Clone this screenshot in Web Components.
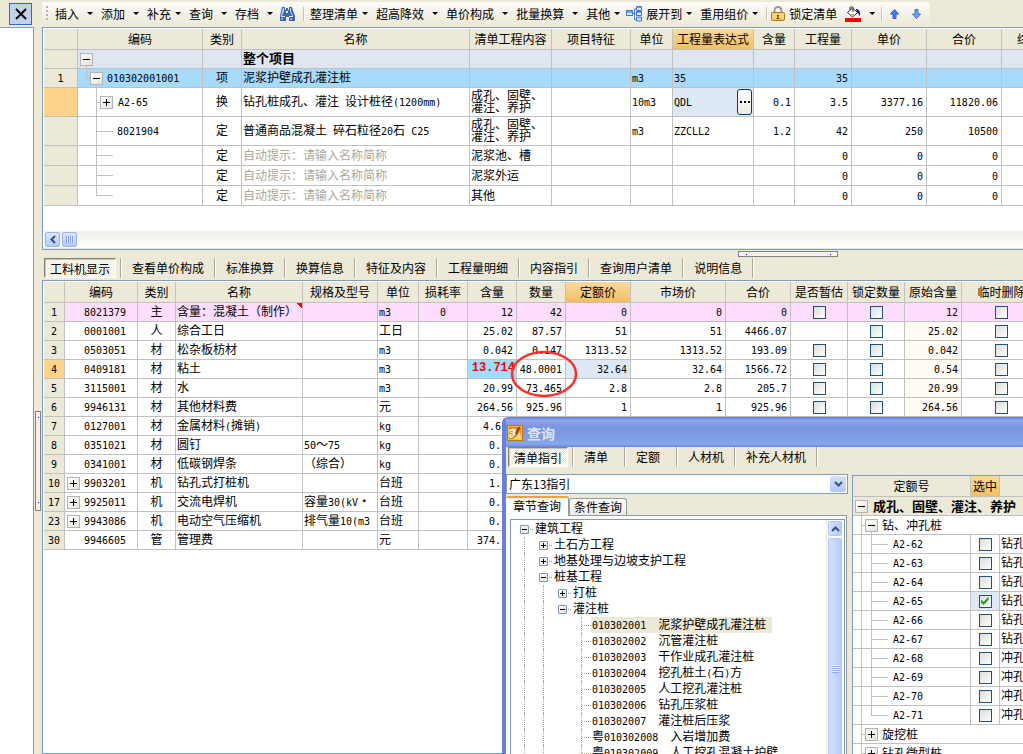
<!DOCTYPE html>
<html lang="zh-CN">
<head>
<meta charset="utf-8">
<title>工程量清单</title>
<style>
html, body { height: 100%; margin: 0; overflow: hidden; background: #ece9d8; }
</style>
</head>
<body>
<budget-app></budget-app>
<script>
const BASE = `
  :host { font: 12px/16px "Noto Sans CJK SC", sans-serif; color: #000; box-sizing: border-box; }
  *, *::before, *::after { box-sizing: border-box; }
  button { font: inherit; color: inherit; background: none; border: 0; padding: 0; margin: 0; white-space: nowrap; }
  .m { font: 10px/12px "DejaVu Sans Mono", monospace; white-space: pre; }
  input[type=checkbox] { appearance: none; display: block; width: 13px; height: 13px; margin: 0 auto;
    border: 1px solid #1c5180; background: linear-gradient(135deg, #dcdcd7, #fff); }
  input[type=checkbox]:checked::before { content: ""; display: block; width: 9px; height: 9px; margin: 1px; background: #21a121;
    clip-path: polygon(0 30%, 35% 60%, 90% 0, 90% 35%, 35% 95%, 0 65%); }
`;
const GRID = `
  table { table-layout: fixed; border-collapse: separate; border-spacing: 0; background: #fff; }
  th { font-weight: normal; background: #ece9d8; height: 20px; }
  th, td { padding: 0 3px 2px 1px; border-right: 1px solid #c0c0c0; border-bottom: 1px solid #c0c0c0;
    white-space: nowrap; overflow: hidden; text-align: left; line-height: 16px; }
  thead th { text-align: center; padding: 0; height: 21px; }
  thead th.on { background: linear-gradient(#fbd9a0, #f2be62); }
  tbody th { text-align: center; padding: 0 0 2px; }
  tbody th.on { background: #ffd28c; }
  td.c { text-align: center; padding: 0 0 2px; }
  td.box { padding: 0; }
  td.r { text-align: right; }
  td.hint { color: #aca899; }
  td.two { line-height: 12px; }
  td.code { background-repeat: no-repeat; padding: 0 3px 0 2px; }
  td.code > div { display: flex; align-items: center; }
  td.code .m { padding-top: 1px; }
`;
const esc = s => s.replace(/&/g, '&amp;').replace(/</g, '&lt;');
/* Latin runs use the half-width monospaced face */
const t = s => esc(s).replace(/[\x20-\x7e\u00a0]+/g, r => `<span class="m">${r}</span>`);

function define(name, css, html, after) {
  const tpl = document.createElement('template');
  tpl.innerHTML = `<style>${BASE}${css}</style>${html}`;
  customElements.define(name, class extends HTMLElement {
    constructor() {
      super();
      this.attachShadow({ mode: 'open' }).append(tpl.content.cloneNode(true));
    }
    connectedCallback() { if (after) after.call(this, this.shadowRoot); }
  });
}

/* ---------- small parts ---------- */
define('tree-toggle', `
  :host { display: block; flex: none; width: 13px; height: 13px; }
  button { display: grid; place-items: center; width: 100%; height: 100%; border: 1px solid #b4b4b4; background: linear-gradient(135deg, #fff, #e4e2da); }
  svg { display: block; }
  :host([small]) { width: 9px; height: 9px; }
  :host([small]) button { border-color: #7898b5; border-radius: 1px; }
  :host([open]) .v { display: none; }
`, `<button type="button" aria-label="展开或折叠"><svg width="7" height="7" viewBox="0 0 7 7" shape-rendering="crispEdges"><path class="h" d="M0 3h7v1H0z"/><path class="v" d="M3 0h1v7H3z"/></svg></button>`,
function (root) {
  if (this.hasAttribute('small')) {
    root.querySelector('.h').setAttribute('d', 'M1 3h5v1H1z');
    root.querySelector('.v').setAttribute('d', 'M3 1h1v5H3z');
  }
});

/* The tabs attribute lists the labels; the first is the selected one */
define('tab-strip', `
  :host { display: flex; align-items: stretch; height: 20px; }
  button { text-align: left; border-right: 1px solid #aca899; box-shadow: 1px 0 #fff; margin-right: 1px; padding: 0 10px; min-width: var(--tab-min, 0); }
  button[aria-selected=true] { border: 1px solid; border-color: #85836f #fff #fff #85836f; box-shadow: inset 1px 1px #c8c5b4; margin: 0; padding: 2px 5px 0; min-width: 0;
    background: conic-gradient(#fff 25%, #ece9d8 0 50%, #fff 0 75%, #ece9d8 0) 0 0/2px 2px; }
  .bar { width: 2px; margin-left: 4px; background: linear-gradient(90deg, #aca899 50%, #fff 50%); }
`, '', function (root) {
  this.getAttribute('tabs').split(' ').forEach((label, i) => {
    const b = document.createElement('button');
    b.type = 'button';
    b.textContent = label;
    b.setAttribute('aria-selected', i === 0);
    root.append(b);
    if (i === 0) {
      const bar = document.createElement('span');
      bar.className = 'bar';
      root.append(bar);
    }
  });
});

/* ---------- toolbar ---------- */
const ICONS = {
  find: `<svg width="16" height="16" viewBox="0 0 16 16"><path d="M3 1h3v3h1V2h2v2h1V1h3l1 4 2 5v5h-6v-4H7v4H1v-5l1-5z" fill="#3d66b0"/><path d="M4 2h1v3L3 10H2l1-5zM11 2h1v3l2 5h-1l-2-5z" fill="#b9d2f6"/><path d="M2 10h4v1H2zM10 10h4v1h-4zM7 5h2v2H7z" fill="#e6effc"/><path d="M2 12h2v2H2zM11 12h2v2h-2z" fill="#84a8e4"/></svg>`,
  tree: `<svg width="16" height="16" viewBox="0 0 16 16"><path d="M6 7.500h3.500M8.500 3v10.500H11M8.500 3H11" stroke="#4a7ac4" fill="none"/><g fill="#dfeaff" stroke="#3f74cf"><path d="M.5 4.500h6v5h-6zM10.500.5h5v4h-5zM10.500 5.500h5v4h-5zM10.500 11h5v4h-5z"/></g><path d="M1 5h5v2H1zM11 1h4v1h-4zM11 6h4v1h-4zM11 11.500h4v1h-4z" fill="#6fa0ee"/></svg>`,
  lock: `<svg width="14" height="16" viewBox="0 0 14 16"><path d="M3.500 8V4.500a3.500 3.500 0 0 1 7 0V8" fill="none" stroke="#9a9a9a" stroke-width="2"/><rect x=".5" y="6.500" width="13" height="8" rx="1" fill="#f2c04c" stroke="#b07818"/><path d="M1 8h12M1 10h12M1 12h12" stroke="#ffe6a0"/><path d="M6 9h2v1.500h-.5V12h1v1h-3v-1h1v-1.500H6z" fill="#6b4300"/></svg>`,
  fill: `<svg width="16" height="16" viewBox="0 0 16 16"><path d="M2.500 6.500l5-4.500 5 4.500-5 4.500z" fill="#fff" stroke="#222"/><path d="M5 4V1.500C5 .5 8 .5 8 1.500V6" fill="none" stroke="#222"/><path d="M4 8l6 0-2.500 2.500z" fill="#bbb"/><path d="M11 3c3 0 4.500 2 4 7.500-1-2.500-1.500-3-3-4z" fill="#10208c"/><path d="M0 12h16v4H0z" fill="#f00"/></svg>`,
  up: `<svg width="9" height="10" viewBox="0 0 9 10"><path d="M4.500.5l4 4.500H6v4.500H3V5H.5z" fill="#3f7ff0" stroke="#2a5cc4"/></svg>`,
  down: `<svg width="9" height="10" viewBox="0 0 9 10"><path d="M4.500 9.500l4-4.500H6V.5H3V5H.5z" fill="#6d9df5" stroke="#3f74d8"/></svg>`
};
const TOOLS = ['插入+', '添加+', '补充', '查询+', '存档+', '@find', '|', '整理清单', '超高降效+', '单价构成+', '批量换算+', '其他', '@tree展开到', '重用组价', '|', '!lock锁定清单', '@fill', '|', '!up', '!down'];
const NAMES = { find: '查找', fill: '填充颜色', up: '上移', down: '下移' };
define('tool-bar', `
  :host { display: flex; align-items: center; height: 27px; }
  .strip { display: flex; align-items: center; height: 23px; padding: 0 9px 0 4px; border-radius: 3px; background: linear-gradient(#fdfcf9, #f3f1e6 60%, #ece9d8); }
  .grip { width: 2px; height: 16px; margin-right: 7px; background: repeating-linear-gradient(#b8b5a2 0 2px, transparent 2px 4px); }
  button { display: flex; align-items: center; height: 20px; margin-right: 8px; }
  button::after { content: ""; width: 6px; height: 3px; margin-left: 4px; background: #000; clip-path: polygon(0 0, 100% 0, 50% 100%); }
  button.wide::after { margin-left: 8px; }
  button.plain::after { display: none; }
  svg { display: block; flex: none; }
  svg + span { margin-left: 4px; }
  button.tree, button.find { margin-left: -2px; }
  button.lock { margin-left: -2px; }
  button.fill { margin-right: 6px; }
  button.fill::after { margin-left: 8px; }
  button.up { margin-right: 13px; margin-left: 2px; }
  button.down { margin-right: 0; }
  .sep { width: 1px; height: 14px; margin-right: 6px; background: #c5c2b0; box-shadow: 1px 0 #fff; }
`, `<div class="strip"><span class="grip"></span>` + TOOLS.map(s => {
  if (s === '|') return '<span class="sep"></span>';
  const m = s.match(/^([@!]?)([a-z]*)(.*?)(\+?)$/);
  const plain = m[1] === '!' || m[2] === 'find';
  return `<button type="button" class="${m[2]} ${plain ? 'plain' : ''} ${m[4] ? 'wide' : ''}" ${m[3] ? '' : `aria-label="${NAMES[m[2]]}"`}>${m[2] ? ICONS[m[2]] : ''}${m[3] ? `<span>${m[3]}</span>` : ''}</button>`;
}).join('') + `</div>`);

/* ---------- bill of quantities ---------- */
const cols = a => '<colgroup>' + a.map(w => `<col style="width:${w}px">`).join('') + '</colgroup>';
const head = (a, on) => '<thead><tr>' + a.map(h => `<th${h === on ? ' class="on"' : ''}>${h}</th>`).join('') + '</tr></thead>';
const cell = (s, c = '') => `<td class="${c}">${t(s)}</td>`;
const sum = a => a.reduce((x, y) => x + y, 0);

const BW = [34, 125, 39, 228, 82, 79, 42, 81, 41, 57, 75, 75, 79];
const BH = ['', '编码', '类别', '名称', '清单工程内容', '项目特征', '单位', '工程量表达式', '含量', '工程量', '单价', '合价', '综合单价'];
const two = '成孔、固壁、<br>灌注、养护';
const bill = (o) => `<tr class="${o.cls || ''}"><th class="${o.on ? 'on' : ''}">${t(o.n || '')}</th>
  <td class="code ${o.g}"><div>${o.tog ? `<tree-toggle ${o.tog}></tree-toggle>` : ''}${o.code ? t(o.code) : ''}</div></td>
  ${cell(o.kind || '', 'c')}<td class="${o.hint ? 'hint' : ''}">${o.bold ? `<b>${o.name}</b>` : t(o.name)}</td>
  <td class="two">${o.work || ''}</td><td></td>${cell(o.unit || '')}
  ${o.edit ? `<td class="edit"><div><input type="text" aria-label="工程量表达式" value="${o.edit}"><button type="button" aria-label="编辑表达式"><i></i></button></div></td>` : cell(o.expr || '')}
  ${(o.v || ['', '', '', '']).map(x => cell(x, 'r')).join('')}<td></td></tr>`;
const hint = { kind: '定', name: '自动提示：请输入名称简称', hint: 1, v: ['', '0', '0', '0'], cls: 'h20' };
define('bill-grid', GRID + `
  :host { display: block; overflow: hidden; }
  table { width: ${sum(BW)}px; }
  tr.h19 > * { height: 19px; }
  tr.h20 > * { height: 20px; }
  tr.h29 > * { height: 29px; }
  tr.root td { background-color: #dfe6f0; }
  tr.root b { font-size: 13px; }
  tr.sel td { background-color: #a8dbfb; }
  td.code { --l: linear-gradient(#c0c0c0, #c0c0c0); }
  .g0 { background-image: var(--l); background-size: 1px 50%; background-position: 8px 100%; }
  .g1 { background-image: var(--l), var(--l), var(--l); background-size: 1px 50%, 5px 1px, 1px 50%; background-position: 8px 0, 8px 50%, 18px 100%; }
  .g2 { background-image: var(--l), var(--l); background-size: 1px 100%, 17px 1px; background-position: 18px 0, 18px 50%; }
  .g3 { background-image: var(--l), var(--l); background-size: 1px 50%, 17px 1px; background-position: 18px 0, 18px 50%; }
  .g1 > div { padding-left: 10px; gap: 4px; }
  .g2 > div { padding-left: 37px; }
  .g2.par > div { padding-left: 20px; gap: 5px; }
  td.edit { padding: 0 1px; background: #dfe9f5; }
  td.edit div { display: flex; align-items: center; }
  input[type=text] { flex: 1; min-width: 0; height: 16px; border: 0; padding: 0; background: none; color: #000; font: 10px/12px "DejaVu Sans Mono", monospace; }
  td.edit button { width: 15px; height: 26px; border: 1px solid #003c74; border-radius: 3px; background: linear-gradient(#fff, #ecebe5); display: grid; place-items: center; }
  td.edit i { width: 10px; height: 2px; background: repeating-linear-gradient(90deg, #000 0 2px, transparent 2px 4px); }
`, `<table>${cols(BW)}${head(BH, '工程量表达式')}<tbody>` + [
  { cls: 'root h19', g: 'g0', tog: 'open', name: '整个项目', bold: 1 },
  { cls: 'sel h19', n: '1', g: 'g1', tog: 'open', code: '010302001001', kind: '项', name: '泥浆护壁成孔灌注桩', unit: 'm3', expr: '35', v: ['', '35', '', ''] },
  { cls: 'h29', on: 1, g: 'g2 par', tog: ' ', code: 'A2-65', kind: '换', name: '钻孔桩成孔、灌注 设计桩径(1200mm)', work: two, unit: '10m3', edit: 'QDL', v: ['0.1', '3.5', '3377.16', '11820.06'] },
  { cls: 'h29', g: 'g2', code: '8021904', kind: '定', name: '普通商品混凝土 碎石粒径20石 C25', work: two, unit: 'm3', expr: 'ZZCLL2', v: ['1.2', '42', '250', '10500'] },
  { ...hint, g: 'g2', work: '泥浆池、槽' },
  { ...hint, g: 'g2', work: '泥浆外运' },
  { ...hint, g: 'g3', work: '其他' }
].map(bill).join('') + `</tbody></table>`);

define('h-scroll', `
  :host { display: flex; align-items: center; gap: 2px; height: 18px; padding-left: 1px; background: linear-gradient(#f0efe9, #fefefb); border-bottom: 1px solid #e6e4da; }
  button { width: 15px; height: 15px; display: grid; place-items: center; border: 1px solid #9cb4e8; border-radius: 2px; background: linear-gradient(#dbe6fe, #b5cafa); }
`, `<button type="button" aria-label="向左滚动"><svg width="6" height="9" viewBox="0 0 6 9"><path d="M5 1L1.500 4.500 5 8" fill="none" stroke="#35507c" stroke-width="2"/></svg></button>
<button type="button" aria-label="滚动块"><svg width="8" height="7" viewBox="0 0 8 7" shape-rendering="crispEdges"><path d="M0 0h1v7H0zM2 0h1v7H2zM4 0h1v7H4zM6 0h1v7H6z" fill="#7d9df0"/><path d="M1 0h1v7H1zM3 0h1v7H3zM5 0h1v7H5zM7 0h1v7H7z" fill="#eef4fe"/></svg></button>`);

/* ---------- resources ---------- */
const RW = [21, 73, 38, 127, 75, 41, 49, 49, 49, 65, 95, 65, 57, 57, 57, 80];
const RH = ['', '编码', '类别', '名称', '规格及型号', '单位', '损耗率', '含量', '数量', '定额价', '市场价', '合价', '是否暂估', '锁定数量', '原始含量', '临时删除'];
const _ = '\u00a0';
const RES = [
  ['1', '8021379', '主', '含量：混凝土（制作）', '', 'm3', '0', '12', '42', '0', '0', '0', 1, '12'],
  ['2', '0001001', '人', '综合工日', '', '工日', '', '25.02', '87.57', '51', '51', '4466.07', 0, '25.02'],
  ['3', '0503051', '材', '松杂板枋材', '', 'm3', '', '0.042', '0.147', '1313.52', '1313.52', '193.09', 1, '0.042'],
  ['4', '0409181', '材', '粘土', '', 'm3', '', '13.714', '48.0001', '32.64', '32.64', '1566.72', 1, '0.54'],
  ['5', '3115001', '材', '水', '', 'm3', '', '20.99', '73.465', '2.8', '2.8', '205.7', 1, '20.99'],
  ['6', '9946131', '材', '其他材料费', '', '元', '', '264.56', '925.96', '1', '1', '925.96', 1, '264.56'],
  ['7', '0127001', '材', '金属材料(摊销)', '', 'kg', '', '4.6' + _ + _],
  ['8', '0351021', '材', '圆钉', '50～75', 'kg', '', '0.' + _ + _],
  ['9', '0341001', '材', '低碳钢焊条', '（综合）', 'kg', '', '0.' + _ + _],
  ['10', '+9903201', '机', '钻孔式打桩机', '', '台班', '', '1.' + _ + _],
  ['17', '+9925011', '机', '交流电焊机', '容量30(kV・', '台班', '', '0.' + _ + _],
  ['23', '+9943086', '机', '电动空气压缩机', '排气量10(m3', '台班', '', '0.' + _ + _],
  ['30', '9946605', '管', '管理费', '', '元', '', '374.' + _ + _]
];
const tick = l => `<td class="c box"><input type="checkbox" aria-label="${l}"></td>`;
define('resource-grid', GRID + `
  :host { display: block; position: relative; overflow: hidden; }
  table { width: ${sum(RW)}px; }
  tbody tr > * { height: 19px; }
  td.code > div { padding-left: 17px; }
  td.code.par > div { padding-left: 0; gap: 4px; }
  tr.main td { background: #ffddff; }
  tr.main td.name { background: linear-gradient(225deg, #f00 4px, transparent 4px) #ffddff; }
  td.orig { background: #fffbf5; }
  td.price { background: #dfe9f5; }
  td.qty { background: #a2dcfd; color: #f00; padding-right: 1px; line-height: 14px; }
  td.qty b { display: block; font: bold 12px/14px "Liberation Mono", monospace; }
  .ring { position: absolute; left: 466px; top: 68px; }
`, `<table>${cols(RW)}${head(RH, '定额价')}<tbody>` + RES.map((r, i) => {
  const par = r[1][0] === '+';
  const full = r.length > 8;
  return `<tr class="${i ? '' : 'main'}"><th class="${i === 3 ? 'on' : ''}">${t(r[0])}</th>
  <td class="code ${par ? 'par' : ''}"><div>${par ? '<tree-toggle></tree-toggle>' : ''}${t(r[1].replace('+', ''))}</div></td>
  ${cell(r[2], 'c')}${cell(r[3], 'name')}${cell(r[4])}${cell(r[5])}${cell(r[6], 'c')}
  ${i === 3 ? `<td class="r qty"><b>${r[7]}</b></td>` : cell(r[7], 'r')}
  ${full ? cell(r[8], 'r') + cell(r[9], 'r' + (i === 3 ? ' price' : '')) + cell(r[10], 'r') + cell(r[11], 'r')
    + (r[12] ? tick('是否暂估') : '<td></td>') + tick('锁定数量') + cell(r[13], 'r orig') + tick('临时删除') : '<td></td>'.repeat(8)}</tr>`;
}).join('') + `</tbody></table>
<svg class="ring" width="69" height="48" viewBox="0 0 69 48" aria-hidden="true"><ellipse cx="34" cy="24" rx="32" ry="22" fill="none" stroke="#f5332d" stroke-width="2.500"/></svg>`);

/* ---------- query dialog ---------- */
const TREE = [
  [0, '-', '建筑工程'], [1, '+', '土石方工程'], [1, '+', '地基处理与边坡支护工程'], [1, '-', '桩基工程'], [2, '+', '打桩'], [2, '-', '灌注桩'],
  [3, '', '010302001  泥浆护壁成孔灌注桩', 'sel'], [3, '', '010302002  沉管灌注桩'], [3, '', '010302003  干作业成孔灌注桩'],
  [3, '', '010302004  挖孔桩土(石)方'], [3, '', '010302005  人工挖孔灌注桩'], [3, '', '010302006  钻孔压浆桩'],
  [3, '', '010302007  灌注桩后压浆'], [3, '', '粤010302008  入岩增加费'], [3, '', '粤010302009  人工挖孔混凝土护壁']
];
define('chapter-tree', `
  :host { display: flex; overflow: hidden; border: solid #7f9db9; border-width: 1px 1px 0; background: #fff; }
  ul { flex: 1; min-width: 0; margin: 0; padding: 1px 0 0 9px; list-style: none; }
  li { display: flex; align-items: center; height: 16px; }
  .g { flex: none; align-self: stretch; width: 15px; margin-left: 4px; border-left: 1px dotted #a5a291; }
  .g.no { border-color: transparent; }
  .leaf { flex: none; align-self: stretch; width: 10px; margin-left: 4px; border-left: 1px dotted #a5a291; background: linear-gradient(90deg, #a5a291 50%, transparent 0) 2px 50%/2px 1px repeat-x; }
  .stub { flex: none; width: 3px; height: 1px; margin-right: 2px; margin-left: 1px; border-top: 1px dotted #a5a291; }
  .label { height: 16px; line-height: 14px; padding: 0 6px 0 0; white-space: nowrap; }
  .leaf + .label { padding-left: 1px; }
  .label.sel { background: #ece9d8; }
  .bar { width: 18px; padding: 1px 2px 0 1px; border-left: 1px solid #edece4; display: flex; flex-direction: column; gap: 2px; }
  .bar button { display: grid; place-items: center; height: 15px; border: 1px solid #b3c6f4; border-radius: 2px; background: linear-gradient(90deg, #d3e0fe, #b9cdfb); }
  .bar button.thumb { flex: 1; border-radius: 2px 2px 0 0; border-bottom: 0; }
  .thumb svg { margin-top: 44px; }
`, `<ul>` + TREE.map(([d, k, s, sel]) => {
  let g = '';
  for (let i = 0; i < d; i++) g += `<span class="g${i === 2 ? ' no' : ''}"></span>`;
  const lead = k ? `<tree-toggle small ${k === '-' ? 'open' : ''}></tree-toggle><span class="stub"></span>` : '<span class="leaf"></span>';
  return `<li>${g}${lead}<span class="label ${sel || ''}">${t(s)}</span></li>`;
}).join('') + `</ul><div class="bar"><button type="button" aria-label="向上滚动"><svg width="9" height="6" viewBox="0 0 9 6"><path d="M1 5l3.500-3.500L8 5" fill="none" stroke="#35507c" stroke-width="2"/></svg></button>
<button type="button" class="thumb" aria-label="滚动块"><svg width="7" height="8" viewBox="0 0 7 8" shape-rendering="crispEdges"><path d="M0 0h7v1H0zM0 2h7v1H0zM0 4h7v1H0zM0 6h7v1H0z" fill="#eef4fe"/><path d="M0 1h7v1H0zM0 3h7v1H0zM0 5h7v1H0zM0 7h7v1H0z" fill="#8caaf0"/></svg></button></div>`);

const QUOTA = ['62', '63', '64', '65', '66', '67', '68', '69', '70', '71'];
define('quota-grid', GRID + `
  :host { display: block; overflow: hidden; border: solid #7f9db9; border-width: 1px 0 0 1px; background: #fff; }
  table { width: 100%; }
  tbody tr > * { height: 19px; }
  td:last-child, th:last-child { border-right: 0; }
  td.code { --l: linear-gradient(#c0c0c0, #c0c0c0); }
  .a { background-color: #ece9d8; background-image: var(--l); background-size: 1px 50%; background-position: 8px 100%; }
  .a > div { gap: 5px; }
  .a b { font-size: 13px; }
  .b { background-image: var(--l), var(--l); background-size: 1px 100%, 5px 1px; background-position: 8px 0, 8px 50%; }
  .b.open { background-image: var(--l), var(--l), var(--l); background-size: 1px 100%, 5px 1px, 1px 50%; background-position: 8px 0, 8px 50%, 18px 100%; }
  .b > div { padding-left: 10px; gap: 4px; }
  .d { background-image: var(--l), var(--l), var(--l); background-size: 1px 100%, 1px 100%, 17px 1px; background-position: 8px 0, 18px 0, 18px 50%; }
  tr.last .d { background-size: 1px 100%, 1px 50%, 17px 1px; }
  .d > div { padding-left: 38px; }
  td.on { background: #dfe9f5; }
`, `<table><colgroup><col style="width:118px"><col style="width:29px"><col></colgroup>${head(['定额号', '选中', ''], '选中')}<tbody>
<tr><td colspan="3" class="code a"><div><tree-toggle open></tree-toggle><b>成孔、固壁、灌注、养护</b></div></td></tr>
<tr><td colspan="3" class="code b open"><div><tree-toggle open></tree-toggle>钻、冲孔桩</div></td></tr>` +
QUOTA.map((q, i) => `<tr class="${i === 9 ? 'last' : ''}"><td class="code d"><div>${t('A2-' + q)}</div></td><td class="c box ${i === 3 ? 'on' : ''}"><input type="checkbox" aria-label="选中 A2-${q}" ${i === 3 ? 'checked' : ''}></td><td>${i < 6 ? '钻孔' : '冲孔'}</td></tr>`).join('') +
['旋挖桩', '钻孔微型桩'].map(s => `<tr><td colspan="3" class="code b"><div><tree-toggle></tree-toggle>${s}</div></td></tr>`).join('') + `</tbody></table>`);

define('query-dialog', `
  :host { display: flex; flex-direction: column; border-left: 4px solid #6a7fdc; border-radius: 6px 0 0 0; background: #ece9d8; overflow: hidden; }
  header { display: flex; align-items: center; gap: 4px; height: 30px; flex: none; margin-left: -4px; padding: 2px 0 0 5px;
    background: linear-gradient(#5a74d4, #8fa8ea 3px, #7b95e0 10px, #7f9fe8 22px, #83a8ec 27px, #6b84da);
    color: #dfe6f8; font-size: 14px; font-weight: bold; }
  .body { flex: 1; min-height: 0; display: grid; grid-template-columns: 342px 1fr; grid-template-rows: 28px 1fr; column-gap: 4px; }
  tab-strip { grid-column: 1 / 3; --tab-min: 51px; padding-left: 2px; }
  .left { display: flex; flex-direction: column; min-height: 0; }
  .combo { display: grid; grid-template-columns: 1fr 16px; border: 1px solid #7f9db9; background: #fff; height: 20px; margin-top: -1px; padding: 1px; flex: none; }
  select { grid-area: 1 / 1 / 2 / 3; appearance: none; border: 0; margin: 0; padding: 0 18px 0 1px; background: none; font: 12px/16px "Noto Sans CJK SC", sans-serif; color: #000; }
  .drop { grid-area: 1 / 2; display: grid; place-items: center; border-radius: 2px; background: linear-gradient(#d5e1fd, #b3c8f8); pointer-events: none; }
  .tabs { display: flex; align-items: flex-end; height: 20px; margin-top: 1px; flex: none; }
  .tabs button { height: 17px; padding: 0 4px; border: 1px solid #919b9c; border-bottom: 0; border-radius: 3px 3px 0 0; background: linear-gradient(#fff, #ecebe5); }
  .tabs button[aria-selected=true] { height: 20px; width: 63px; padding: 0 7px 2px; margin-bottom: -1px; border-top: 2px solid #f5a32c; background: #fcfcfe; position: relative; border-left: 0; }
  .panel { flex: 1; min-height: 0; display: flex; border: solid #919b9c; border-width: 1px 1px 0 0; padding: 3px 1px 0 4px; background: #fcfcfe; margin-right: 1px; }
  chapter-tree { flex: 1; }
`, `<header><svg width="16" height="16" viewBox="0 0 16 16"><rect x=".5" y=".5" width="15" height="15" fill="#f6c43a" stroke="#c8700c"/><rect x="2" y="2" width="12" height="12" fill="#c9862c"/><path d="M2 5l5-2-1 1.500 3-1-1 2 2 .5-3 1 2 1-2 3-2 2H3l-1-2 1-2z" fill="#fff8d8"/><path d="M3 7l3-1M3 9l3-1M4 11l2-1" stroke="#c9862c"/><path d="M12.500 2L9 9" stroke="#7c2f0c" stroke-width="1.500"/><path d="M13 6l1 8H6l4-3z" fill="#ffe27a"/></svg>查询</header>
<div class="body">
  <tab-strip tabs="清单指引 清单 定额 人材机 补充人材机"></tab-strip>
  <div class="left">
    <div class="combo"><select aria-label="清单指引库"><option>广东13指引</option></select><span class="drop"><svg width="9" height="6" viewBox="0 0 9 6"><path d="M1 1l3.500 3.500L8 1" fill="none" stroke="#35507c" stroke-width="2"/></svg></span></div>
    <div class="tabs"><button type="button" aria-selected="true">章节查询</button><button type="button">条件查询</button></div>
    <div class="panel"><chapter-tree></chapter-tree></div>
  </div>
  <quota-grid></quota-grid>
</div>`);

/* ---------- page ---------- */
define('side-panel', `
  :host { display: flex; flex-direction: column; width: 34px; flex: none; }
  .top { height: 27px; padding: 3px 2px 0 9px; }
  .top button { display: grid; place-items: center; width: 23px; height: 22px; border: 1px solid #316ac5; background: #c1d2ee; }
  .pane { flex: 1; border: solid #7f9db9; border-width: 1px 1px 0 0; background: #fff; }
`, `<div class="top"><button type="button" aria-label="关闭"><svg width="12" height="12" viewBox="0 0 12 12"><path d="M1 1l10 10M11 1L1 11" stroke="#000" stroke-width="2"/></svg></button></div><div class="pane"></div>`);

define('budget-app', `
  :host { display: flex; height: 100vh; position: relative; overflow: hidden; background: #ece9d8; }
  .gutter { width: 8px; flex: none; padding: 411px 0 0 1px; }
  .gutter i { display: block; width: 6px; height: 100px; border: 1px solid #808080; background: radial-gradient(#00f 0 0) 2px 5px/1px 1px no-repeat, radial-gradient(#00f 0 0) 2px 90px/1px 1px no-repeat, #f4f2ea; }
  main { flex: 1; min-width: 0; display: flex; flex-direction: column; }
  .top, .bottom { border: solid #7f9db9; border-width: 1px 0 1px 1px; background: #fff; padding: 1px 0 0 1px; }
  .top bill-grid { margin-bottom: 25px; }
  .split { height: 8px; padding: 1px 0 0 696px; flex: none; }
  .split i { display: block; width: 100px; height: 6px; border: 1px solid #808080; background: radial-gradient(#00f 0 0) 7px 2px/1px 1px no-repeat, radial-gradient(#00f 0 0) 91px 2px/1px 1px no-repeat, #f4f2ea; }
  tab-strip { margin: 0 0 2px 2px; flex: none; }
  .bottom { flex: 1; min-height: 0; }
  query-dialog { position: absolute; left: 502px; top: 417px; right: 0; bottom: 0; }
`, `<side-panel></side-panel><div class="gutter"><i></i></div>
<main><tool-bar></tool-bar>
<section class="top"><bill-grid></bill-grid><h-scroll></h-scroll></section>
<div class="split"><i></i></div>
<tab-strip tabs="工料机显示 查看单价构成 标准换算 换算信息 特征及内容 工程量明细 内容指引 查询用户清单 说明信息"></tab-strip>
<section class="bottom"><resource-grid></resource-grid></section></main>
<query-dialog></query-dialog>`);
</script>
</body>
</html>
